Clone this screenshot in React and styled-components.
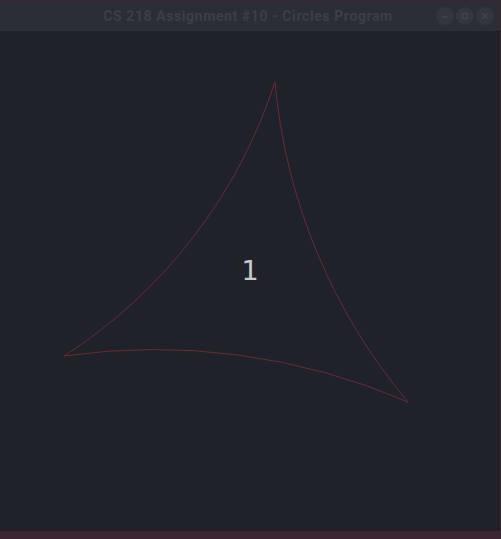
import React from "react";
import styled, { createGlobalStyle } from "styled-components";

const GlobalStyle = createGlobalStyle`
  html, body {
    margin: 0;
    padding: 0;
    background: #3b2631;
  }
`;

const Frame = styled.div`
  width: 501px;
  height: 539px;
  display: flex;
  flex-direction: column;
  background: #3b2631;
  overflow: hidden;
`;

const Window = styled.div`
  width: 500px;
  display: flex;
  flex-direction: column;
  border-top: 1px solid #3a2731;
`;

const TitleBar = styled.div`
  height: 30px;
  display: flex;
  align-items: center;
  position: relative;
  background: #2b2e34;
`;

const Title = styled.div`
  flex: 1;
  text-align: center;
  padding-right: 4px;
  font-family: Roboto, "Liberation Sans", sans-serif;
  font-weight: 700;
  font-size: 14px;
  color: #3c3f45;
  letter-spacing: 0.6px;
`;

const Controls = styled.div`
  position: absolute;
  right: 6px;
  top: 6px;
  display: flex;
  gap: 2px;
`;

const ControlButton = styled.div`
  width: 18px;
  height: 18px;
  border-radius: 50%;
  background: #33363c;
  display: flex;
  align-items: center;
  justify-content: center;
  color: #43464c;
`;

const Canvas = styled.div`
  height: 500px;
  background: #1f2228;
  position: relative;
`;

const Drawing = styled.svg`
  display: block;
`;

const Label = styled.text`
  font-family: "DejaVu Sans", sans-serif;
  font-size: 27px;
  fill: #c9c9c9;
`;

export default function App() {
  return (
    <>
      <GlobalStyle />
      <Frame>
        <Window>
          <TitleBar>
            <Title>CS 218 Assignment #10 - Circles Program</Title>
            <Controls>
              <ControlButton>
                <svg width="10" height="10" viewBox="0 0 10 10">
                  <path d="M2 6 H8" stroke="currentColor" strokeWidth="1.5" />
                </svg>
              </ControlButton>
              <ControlButton>
                <svg width="10" height="10" viewBox="0 0 10 10">
                  <rect x="2.5" y="2.5" width="5" height="5" fill="none" stroke="currentColor" strokeWidth="1.2" />
                </svg>
              </ControlButton>
              <ControlButton>
                <svg width="10" height="10" viewBox="0 0 10 10">
                  <path d="M2.5 2.5 L7.5 7.5 M7.5 2.5 L2.5 7.5" stroke="currentColor" strokeWidth="1.4" />
                </svg>
              </ControlButton>
            </Controls>
          </TitleBar>
          <Canvas>
            <Drawing width="500" height="500" viewBox="0 0 500 500">
              <path
                d="M275,51 A516,516 0 0 1 64,325 A637,637 0 0 1 408,371 A577,577 0 0 1 275,51 Z"
                fill="none"
                stroke="#6a2b31"
                strokeWidth="1"
              />
              <Label x="250" y="249" textAnchor="middle">1</Label>
            </Drawing>
          </Canvas>
        </Window>
      </Frame>
    </>
  );
}
